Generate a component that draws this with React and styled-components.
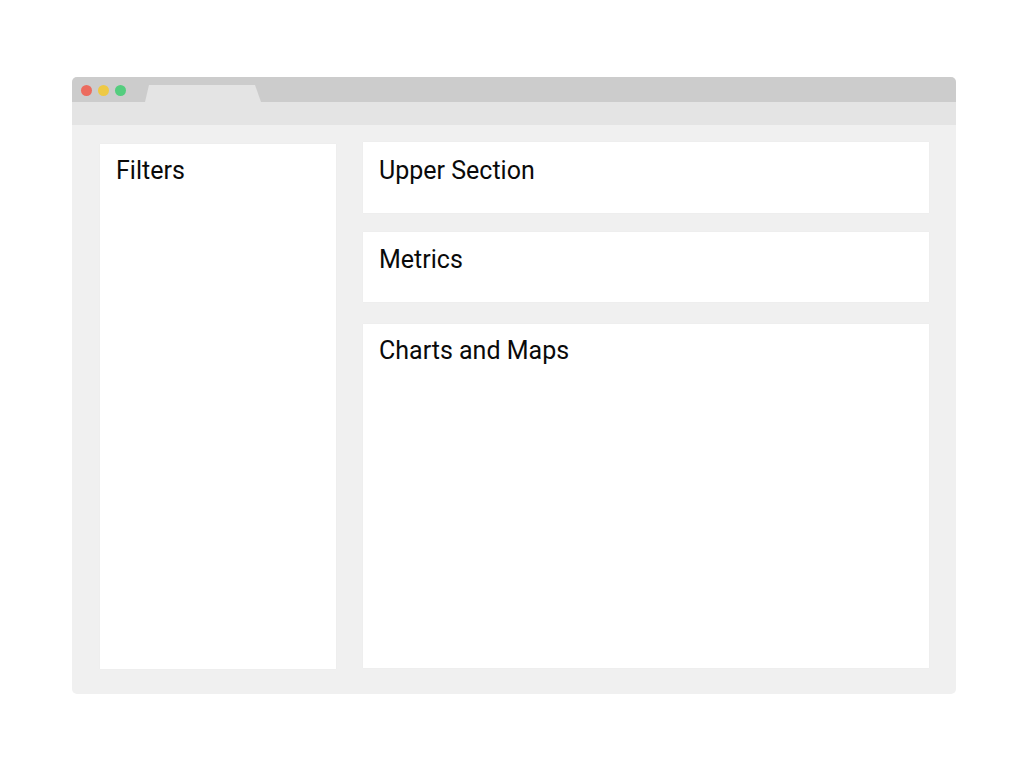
import React from "react";
import styled, { createGlobalStyle } from "styled-components";

const Global = createGlobalStyle`
  html, body { margin: 0; padding: 0; background: #ffffff; }
  body { font-family: Roboto, "Liberation Sans", sans-serif; }
`;

const Page = styled.div`
  width: 1024px;
  height: 768px;
  padding: 77px 0 0 72px;
  box-sizing: border-box;
`;

const Window = styled.div`
  width: 884px;
  height: 617px;
  border-radius: 5px;
  overflow: hidden;
  display: flex;
  flex-direction: column;
  background: #f0f0f0;
`;

const TitleBar = styled.div`
  height: 25px;
  background: #cccccc;
  display: flex;
  align-items: flex-end;
  padding-left: 9px;
  flex-shrink: 0;
`;

const Dots = styled.div`
  display: flex;
  gap: 6px;
  align-self: center;
  margin-top: 1px;
`;

const Dot = styled.span`
  width: 11px;
  height: 11px;
  border-radius: 50%;
  background: ${(p) => p.$color};
`;

const Tab = styled.div`
  margin-left: 19px;
  width: 116px;
  height: 17px;
  background: #e4e4e4;
  clip-path: polygon(4px 0, 110px 0, 116px 100%, 0 100%);
`;

const Toolbar = styled.div`
  height: 23px;
  background: #e4e4e4;
  flex-shrink: 0;
`;

const Content = styled.div`
  flex: 1;
  display: grid;
  grid-template-columns: 236px 566px;
  column-gap: 27px;
  padding: 17px 27px 26px 28px;
  min-height: 0;
`;

const Panel = styled.div`
  background: #ffffff;
  box-shadow: 0 0 1px rgba(0, 0, 0, 0.06);
  padding: ${(p) => p.$pt || 13}px 16px 12px;
  box-sizing: border-box;
  height: ${(p) => (p.$h ? `${p.$h}px` : "auto")};
  flex: ${(p) => (p.$grow ? 1 : "none")};
`;

const FilterPanel = styled(Panel)`
  margin-top: 2px;
  margin-bottom: -1px;
`;

const Column = styled.div`
  display: flex;
  flex-direction: column;
`;

const Title = styled.div`
  font-size: 25px;
  line-height: 29px;
  color: #0a0a0a;
`;

const Gap = styled.div`
  height: ${(p) => p.$h}px;
  flex-shrink: 0;
`;

export default function App() {
  return (
    <>
      <Global />
      <Page>
        <Window>
          <TitleBar>
            <Dots>
              <Dot $color="#ec6b5e" />
              <Dot $color="#eec944" />
              <Dot $color="#54cd7e" />
            </Dots>
            <Tab />
          </TitleBar>
          <Toolbar />
          <Content>
            <FilterPanel $pt={12}>
              <Title>Filters</Title>
            </FilterPanel>
            <Column>
              <Panel $h={71} $pt={14}>
                <Title>Upper Section</Title>
              </Panel>
              <Gap $h={19} />
              <Panel $h={70} $pt={13}>
                <Title>Metrics</Title>
              </Panel>
              <Gap $h={22} />
              <Panel $grow $pt={12}>
                <Title>Charts and Maps</Title>
              </Panel>
            </Column>
          </Content>
        </Window>
      </Page>
    </>
  );
}
